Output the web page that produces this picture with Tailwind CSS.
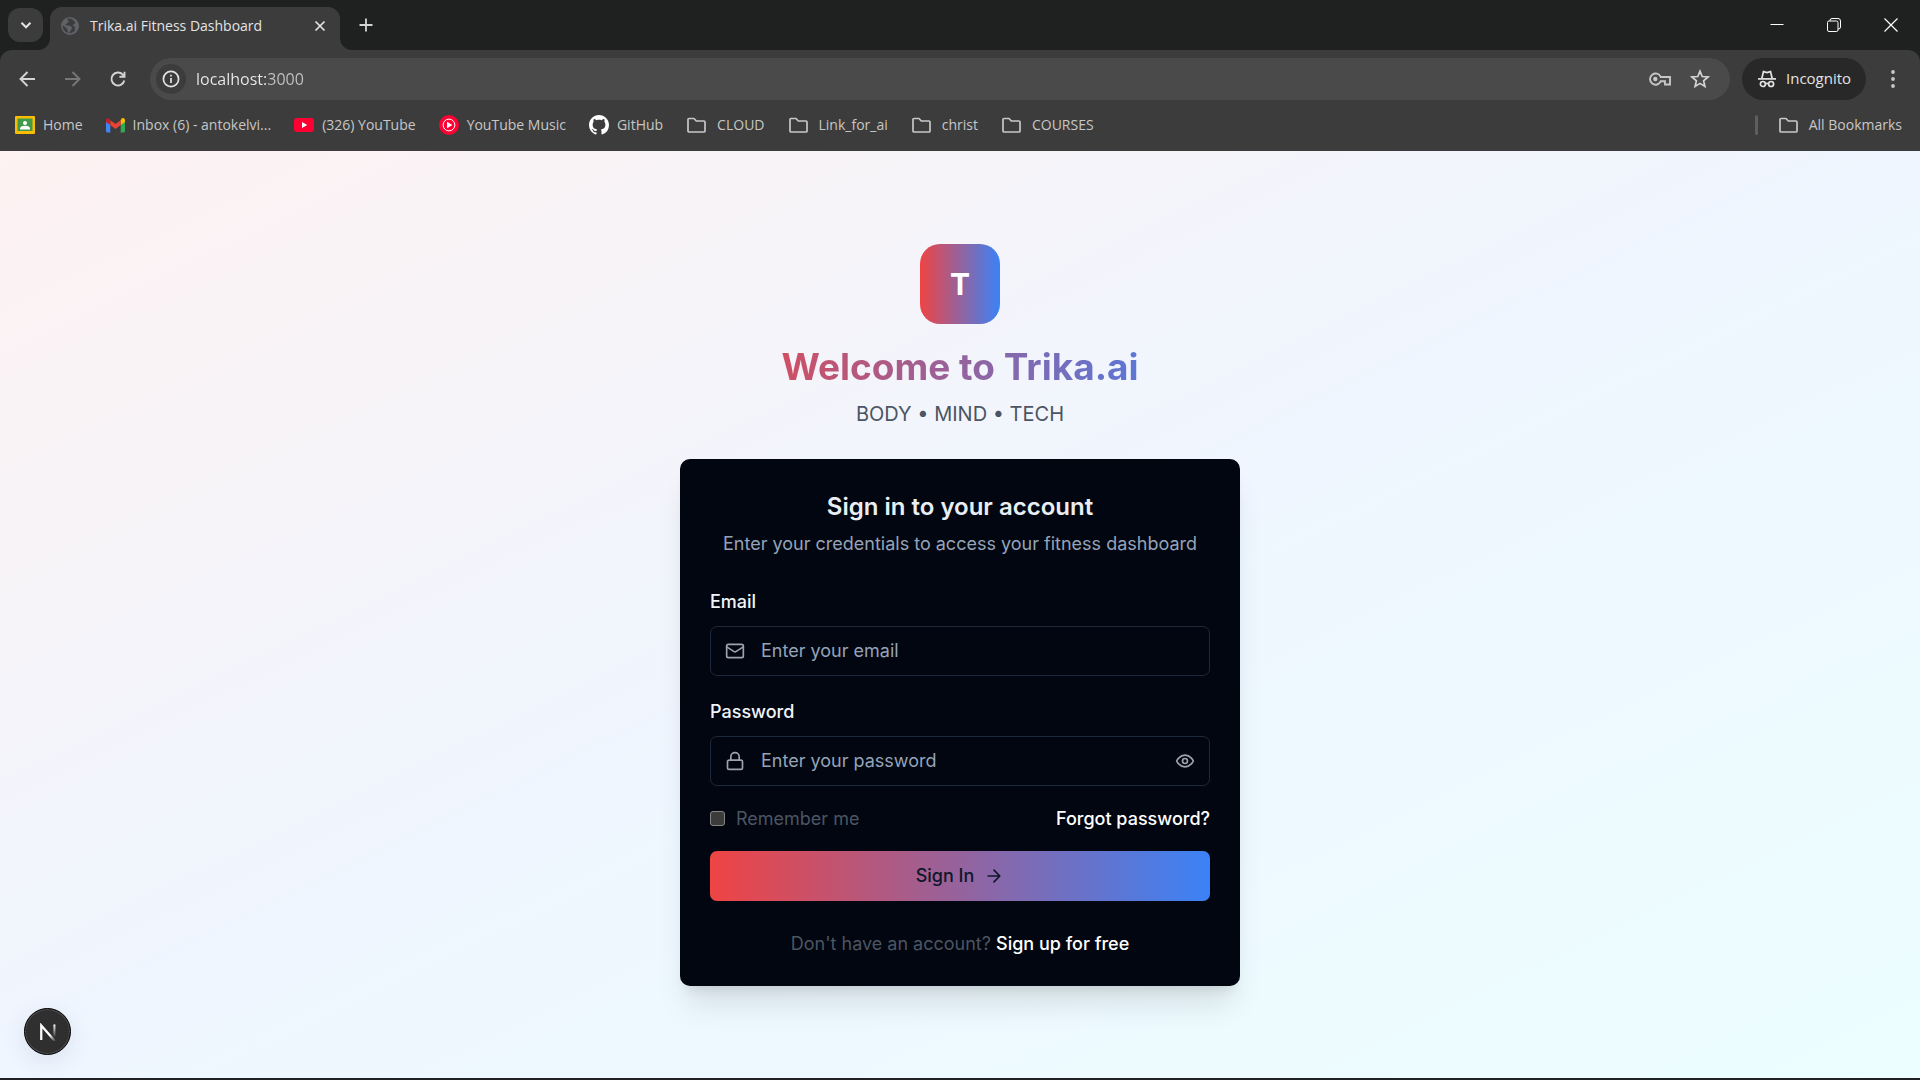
<!DOCTYPE html>
<html lang="en">
<head>
<meta charset="utf-8">
<meta name="viewport" content="width=device-width, initial-scale=1">
<title>Trika.ai Fitness Dashboard</title>
<script src="https://cdn.jsdelivr.net/npm/@tailwindcss/browser@4"></script>
</head>
<body class="flex min-h-screen flex-col bg-[#202124] font-['Inter',sans-serif]">

<svg class="hidden">
  <symbol id="folder" viewBox="0 0 21 20"><path d="M2 4.5a1 1 0 0 1 1-1h5l2.3 2.5H18a1 1 0 0 1 1 1V16a1 1 0 0 1-1 1H3a1 1 0 0 1-1-1z" fill="none" stroke="#c7c7c7" stroke-width="1.7" stroke-linejoin="round"/></symbol>
</svg>

<!-- Browser chrome -->
<header class="bg-[#1f2120] font-['Open_Sans',sans-serif] text-sm text-[#dedede]">
  <div class="flex h-[50px] items-end justify-between">
    <div class="flex h-full items-end">
      <button aria-label="Search tabs" class="mb-2 ml-2 grid h-[34px] w-[35px] place-items-center rounded-xl bg-[#3c3c3c]">
        <svg class="size-3" viewBox="0 0 12 12" fill="none" stroke="#e3e3e3" stroke-width="2"><path d="M1.5 3.8 6 8.3l4.500-4.500"/></svg>
      </button>
      <div class="relative ml-[7px] flex h-[43px] w-[290px] items-center rounded-t-xl bg-[#3c3c3c] pr-3 pb-1.5 pl-[11px]">
        <svg class="absolute bottom-0 -left-3 size-3" viewBox="0 0 12 12" fill="#3c3c3c"><path d="M12 0v12H0A12 12 0 0 0 12 0Z"/></svg>
        <svg class="absolute -right-3 bottom-0 size-3" viewBox="0 0 12 12" fill="#3c3c3c"><path d="M0 0v12h12A12 12 0 0 1 0 0Z"/></svg>
        <svg class="size-[18px]" viewBox="0 0 18 18"><circle cx="9" cy="9" r="9" fill="#5f6368"/><path d="M7 1.500c-1 .5-.8 1.800.3 2.200 1 .4.600 1.500-.4 1.800-1.200.3-1 1.500-2 1.800-.8.3-.4 1.200.5 1.200h3c1.300 0 1.200 1.300 2.200 1.500 1 .2.8 1.300 0 1.900-.9.6-.7 1.500-1.400 2.300-.5.600-1 1.200-1 2a7.300 7.300 0 0 0 6-3.300c-.8-.3-.7-1.300-.2-1.900.6-.7.2-1.300-.6-1.400-1.400-.2-1.800-1.600-.8-2.400.7-.6 1.300-.3 1.800-.9A7.400 7.400 0 0 0 7 1.500ZM1.800 8A7.300 7.300 0 0 0 7 16c.4-.8-.1-1.400-.4-2-.5-.8.200-1.500-.5-2.200C5 10.700 3.500 9.700 1.800 8Z" fill="#3c3c3c"/></svg>
        <span class="ml-[11px] flex-1 text-[#e3e3e3]">Trika.ai Fitness Dashboard</span>
        <button aria-label="Close tab" class="grid size-4 place-items-center">
          <svg class="size-3" viewBox="0 0 12 12" stroke="#e3e3e3" stroke-width="1.700"><path d="m1.500 1.500 9 9m0-9-9 9"/></svg>
        </button>
      </div>
      <button aria-label="New tab" class="mb-[17px] ml-[18px] grid size-4 place-items-center">
        <svg class="size-[14px]" viewBox="0 0 14 14" stroke="#d4d4d4" stroke-width="1.800"><path d="M7 .5v13M.5 7h13"/></svg>
      </button>
    </div>
    <div class="flex h-full items-center gap-[41px] pr-[21px] pb-px">
      <button aria-label="Minimize"><svg class="size-4" viewBox="0 0 16 16" stroke="#fff"><path d="M1.500 7.500h13"/></svg></button>
      <button aria-label="Restore"><svg class="size-4" viewBox="0 0 16 16" fill="none" stroke="#fff"><rect x="1.500" y="4" width="10.500" height="10.500" rx="1.500"/><path d="M4 4V3.500a2 2 0 0 1 2-2h6a2.500 2.500 0 0 1 2.500 2.500v6a2 2 0 0 1-2 2H12"/></svg></button>
      <button aria-label="Close window"><svg class="size-4" viewBox="0 0 16 16" stroke="#fff" stroke-width="1.200"><path d="m1.500 1.500 13 13m0-13-13 13"/></svg></button>
    </div>
  </div>

  <div class="rounded-t-xl bg-[#3c3c3c]">
    <nav aria-label="Browser toolbar" class="flex h-[58px] items-center pr-[18px] pl-[18px]">
      <button aria-label="Back"><svg class="size-[18px]" viewBox="0 0 18 18" fill="none" stroke="#d4d4d4" stroke-width="1.900"><path d="M9.500 2 2.500 9l7 7M2.500 9H17"/></svg></button>
      <button aria-label="Forward" class="ml-7"><svg class="size-[18px]" viewBox="0 0 18 18" fill="none" stroke="#777" stroke-width="1.900"><path d="m8.500 2 7 7-7 7M15.500 9H1"/></svg></button>
      <button aria-label="Reload" class="ml-[27px]"><svg class="size-[18px]" viewBox="0 0 18 18" fill="none" stroke="#d4d4d4" stroke-width="1.900"><path d="M15.300 10.500a6.500 6.500 0 1 1-1.500-5.900L15.500 6.300M15.500 1.700v5.100h-5.100"/></svg></button>
      <div class="ml-[23px] flex h-[42px] flex-1 items-center rounded-full bg-[#4a4a4a] pr-5 pl-1.5">
        <button aria-label="View site information" class="grid size-[30px] place-items-center rounded-full bg-[#3c3c3c]">
          <svg class="size-[18px]" viewBox="0 0 18 18" fill="none" stroke="#e3e3e3" stroke-width="1.700"><circle cx="9" cy="9" r="7.600"/><path d="M9 8v5M9 4.800v1.700"/></svg>
        </button>
        <input aria-label="Address" value="localhost:3000" class="ml-2.5 min-w-0 flex-1 bg-linear-to-r from-[#ececec] from-[70px] to-[#c4c4c4] to-[70px] bg-clip-text text-base text-transparent outline-none">
        <button aria-label="Manage passwords"><svg class="h-4 w-6" viewBox="0 0 24 16" fill="none" stroke="#c7c7c7" stroke-width="1.900"><path d="M12.800 6A5.600 5.600 0 1 0 12.800 10.200H17V13.500h5V6Z"/><circle cx="7.300" cy="8" r="2.200" fill="#c7c7c7" stroke="none"/></svg></button>
        <button aria-label="Bookmark this tab" class="ml-[18px]"><svg class="size-5" viewBox="0 0 20 20" fill="none" stroke="#d4d4d4" stroke-width="1.700"><path d="m10 2.200 2.200 5.300 5.800.5-4.400 3.800 1.300 5.600-4.900-3-4.900 3 1.300-5.600L2 8l5.800-.5Z"/></svg></button>
      </div>
      <button class="ml-3 flex h-[42px] w-[124px] items-center gap-2.5 rounded-full bg-[#282828] pl-4 text-[15px] text-[#e3e3e3]">
        <svg class="size-[18px]" viewBox="0 0 18 18" fill="none" stroke="#e3e3e3" stroke-width="1.700"><path d="M0 8.900h18"/><path d="M3.800 8.500 5.500 1.600l3.500.9 3.500-.9 1.700 6.900M7.500 13.800q1.500-.9 3 0"/><circle cx="4.900" cy="14" r="2.500"/><circle cx="13.100" cy="14" r="2.500"/></svg>
        Incognito
      </button>
      <button aria-label="Browser menu" class="ml-[18px]"><svg class="size-[18px]" viewBox="0 0 18 18" fill="#c7c7c7"><circle cx="9" cy="2" r="1.900"/><circle cx="9" cy="9" r="1.900"/><circle cx="9" cy="16" r="1.900"/></svg></button>
    </nav>

    <nav aria-label="Bookmarks" class="flex h-[43px] items-start justify-between pt-[7px] pr-[18px] pl-[15px] text-[#c7c7c7]">
      <div class="flex items-center gap-[23px]">
        <a href="#" class="flex items-center gap-2"><svg class="size-5" viewBox="0 0 20 20"><rect y="1" width="20" height="18" rx="1" fill="#fbbc04"/><rect x="2.500" y="3.500" width="15" height="12.500" fill="#3f9a4c"/><circle cx="10" cy="8" r="2" fill="#fff"/><path d="M5 13.800q0-3 5-3t5 3v.7H5z" fill="#fff"/></svg>Home</a>
        <a href="#" class="flex items-center gap-2"><svg class="size-[19px]" viewBox="0 0 19 19"><path d="M0 5.500 4.300 8v8.500H1.400A1.400 1.400 0 0 1 0 15.100Z" fill="#4285f4"/><path d="M19 5.500 14.700 8v8.500h2.900a1.400 1.400 0 0 0 1.400-1.400Z" fill="#34a853"/><path d="M14.700 4.200v4.900L19 5.900V4.200c0-1.900-2-2.800-3.400-1.700Z" fill="#fbbc04"/><path d="M4.300 9.100V4.200L9.500 8l5.200-3.800v4.900L9.500 13Z" fill="#ea4335"/><path d="M0 4.200v1.700l4.300 3.200V4.200l-.9-.7C2 1.400 0 2.300 0 4.200Z" fill="#c5221f"/></svg>Inbox (6) - antokelvi...</a>
        <a href="#" class="flex items-center gap-2"><svg class="size-5" viewBox="0 0 20 20"><rect y="3" width="20" height="14" rx="3" fill="#ff0033"/><path d="m8 7 5.200 3L8 13Z" fill="#fff"/></svg>(326) YouTube</a>
        <a href="#" class="flex items-center gap-2"><svg class="size-5" viewBox="0 0 20 20"><circle cx="10" cy="10" r="10" fill="#ff0033"/><circle cx="10" cy="10" r="5.900" fill="none" stroke="#fff"/><path d="m8 6.800 5.400 3.200L8 13.200Z" fill="#fff"/></svg>YouTube Music</a>
        <a href="#" class="flex items-center gap-2"><svg class="size-5" viewBox="0 0 16 16" fill="#fff"><path d="M8 0C3.580 0 0 3.580 0 8c0 3.540 2.290 6.530 5.470 7.590.4.070.55-.17.55-.38 0-.19-.01-.82-.01-1.490-2.010.37-2.530-.49-2.690-.94-.09-.23-.48-.94-.82-1.130-.28-.15-.68-.52-.01-.53.63-.01 1.080.58 1.230.82.72 1.210 1.870.87 2.330.66.07-.52.28-.87.51-1.070-1.780-.2-3.640-.89-3.640-3.950 0-.87.31-1.590.82-2.150-.08-.2-.36-1.020.08-2.120 0 0 .67-.21 2.200.82.64-.18 1.320-.27 2-.27s1.360.09 2 .27c1.530-1.040 2.200-.82 2.200-.82.44 1.100.16 1.920.08 2.120.51.56.82 1.270.82 2.150 0 3.070-1.870 3.750-3.650 3.950.29.25.54.73.54 1.480 0 1.070-.01 1.930-.01 2.200 0 .21.15.46.55.38A8.010 8.010 0 0 0 16 8c0-4.420-3.580-8-8-8Z"/></svg>GitHub</a>
        <a href="#" class="flex items-center gap-2.5"><svg class="h-5 w-[21px]"><use href="#folder"/></svg>CLOUD</a>
        <a href="#" class="flex items-center gap-2.5"><svg class="h-5 w-[21px]"><use href="#folder"/></svg>Link_for_ai</a>
        <a href="#" class="flex items-center gap-2.5"><svg class="h-5 w-[21px]"><use href="#folder"/></svg>christ</a>
        <a href="#" class="flex items-center gap-2.5"><svg class="h-5 w-[21px]"><use href="#folder"/></svg>COURSES</a>
      </div>
      <div class="flex items-center">
        <div class="mr-5 h-5 w-[3px] rounded-full bg-[#5e5e5e]"></div>
        <a href="#" class="flex items-center gap-2.5"><svg class="h-5 w-[21px]"><use href="#folder"/></svg>All Bookmarks</a>
      </div>
    </nav>
  </div>
</header>

<!-- Sign-in page -->
<main class="relative mb-0.5 flex flex-1 flex-col items-center justify-center bg-linear-to-br/srgb from-[#fef2f2] via-[#eff6ff] to-[#ecfeff] px-5">
  <div class="w-full max-w-[560px]">
    <div class="flex flex-col items-center text-center">
      <div class="grid size-20 place-items-center rounded-[20px] bg-linear-to-r/srgb from-[#ef4444] to-[#3b82f6] text-3xl font-bold text-white">T</div>
      <h1 class="mt-5 w-full bg-linear-to-r/srgb from-[#ef4444] to-[#3b82f6] bg-clip-text text-[37px] leading-[45px] font-bold text-transparent">Welcome to Trika.ai</h1>
      <p class="mt-2.5 text-xl leading-[30px] text-[#4b5563]">BODY • MIND • TECH</p>
    </div>

    <section class="mt-[30px] rounded-[10px] bg-[#020610] p-[30px] text-lg leading-[25px] shadow-[0_25px_31px_-6px_rgba(0,0,0,0.1),0_10px_12px_-7px_rgba(0,0,0,0.1)]">
      <div class="text-center">
        <h2 class="text-2xl leading-[35px] font-semibold text-[#e9eef5]">Sign in to your account</h2>
        <p class="mt-[7px] text-[#94a3b8]">Enter your credentials to access your fitness dashboard</p>
      </div>
      <form class="mt-[33px]">
        <label for="email" class="block font-medium text-[#f1f5f9]">Email</label>
        <div class="mt-3 flex h-[50px] items-center rounded-[7px] border border-[#1e293b] px-3.5">
          <svg class="size-5 shrink-0" viewBox="0 0 24 24" fill="none" stroke="#9ca3af" stroke-width="2" stroke-linecap="round" stroke-linejoin="round"><rect x="2" y="4" width="20" height="16" rx="2"/><path d="m22 7-8.970 5.700a1.940 1.940 0 0 1-2.060 0L2 7"/></svg>
          <input id="email" type="email" placeholder="Enter your email" class="ml-4 min-w-0 flex-1 bg-transparent text-[#f8fafc] outline-none placeholder:text-[#94a3b8]">
        </div>
        <label for="password" class="mt-[23px] block font-medium text-[#f1f5f9]">Password</label>
        <div class="mt-3 flex h-[50px] items-center rounded-[7px] border border-[#1e293b] px-3.5">
          <svg class="size-5 shrink-0" viewBox="0 0 24 24" fill="none" stroke="#9ca3af" stroke-width="2" stroke-linecap="round" stroke-linejoin="round"><rect x="3" y="11" width="18" height="11" rx="2"/><path d="M7 11V7a5 5 0 0 1 10 0v4"/></svg>
          <input id="password" type="password" placeholder="Enter your password" class="ml-4 min-w-0 flex-1 bg-transparent text-[#f8fafc] outline-none placeholder:text-[#94a3b8]">
          <button type="button" aria-label="Show password"><svg class="size-5" viewBox="0 0 24 24" fill="none" stroke="#9ca3af" stroke-width="2" stroke-linecap="round" stroke-linejoin="round"><path d="M2 12s3-7 10-7 10 7 10 7-3 7-10 7-10-7-10-7Z"/><circle cx="12" cy="12" r="3"/></svg></button>
        </div>
        <div class="mt-5 flex items-center justify-between">
          <label class="flex items-center gap-[11px] text-[#4b5563]"><input type="checkbox" class="size-[15px] appearance-none rounded-[3px] border border-[#858585] bg-[#3b3b3b]">Remember me</label>
          <a href="#" class="font-medium text-white">Forgot password?</a>
        </div>
        <button type="submit" class="mt-5 flex h-[50px] w-full items-center justify-center gap-2.5 rounded-[7px] bg-linear-to-r/srgb from-[#ef4444] to-[#3b82f6] font-medium text-[#0f172a]">Sign In
          <svg class="size-5" viewBox="0 0 24 24" fill="none" stroke="currentColor" stroke-width="2" stroke-linecap="round" stroke-linejoin="round"><path d="M5 12h14M12 5l7 7-7 7"/></svg>
        </button>
      </form>
      <p class="mt-[30px] text-center text-[#4b5563]">Don't have an account? <a href="#" class="font-medium text-white">Sign up for free</a></p>
    </section>
  </div>

  <button aria-label="Open Next.js Dev Tools" class="absolute bottom-[23px] left-6 grid size-[47px] place-items-center rounded-full border border-black bg-[#2f2f30] shadow-[inset_0_0_0_1px_#4d4d4d,0_6px_24px_rgba(30,50,110,0.1)]">
    <svg class="size-[18px]" viewBox="0 0 16 16" fill="none">
      <defs>
        <linearGradient id="fadeDiagonal" gradientUnits="userSpaceOnUse" x1="8" y1="8" x2="15" y2="16"><stop offset="0.300" stop-color="#fff"/><stop offset="1" stop-color="#fff" stop-opacity="0"/></linearGradient>
        <linearGradient id="fadeStem" gradientUnits="userSpaceOnUse" x1="14" y1="1" x2="14" y2="13"><stop stop-color="#fff"/><stop offset="1" stop-color="#fff" stop-opacity="0"/></linearGradient>
      </defs>
      <path d="M2 15V2.200L14.500 16.500" stroke="url(#fadeDiagonal)" stroke-width="2"/>
      <path d="M13.700 1.300V12" stroke="url(#fadeStem)" stroke-width="1.800"/>
    </svg>
  </button>
</main>
</body>
</html>
